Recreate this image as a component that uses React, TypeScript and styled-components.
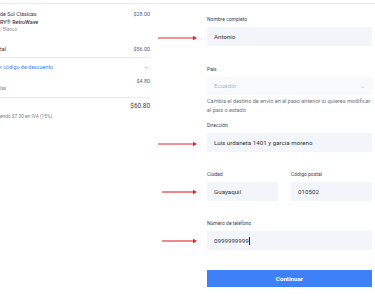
import React from "react";
import styled, { createGlobalStyle } from "styled-components";

const Global = createGlobalStyle`
  html, body { margin: 0; padding: 0; background: #ffffff; }
  body { font-family: Roboto, "Liberation Sans", Arial, sans-serif; }
  * { box-sizing: border-box; }
`;

const Page = styled.div`
  position: relative;
  width: 375px;
  height: 302px;
  overflow: hidden;
  padding-top: 3px;
`;

const Main = styled.div`
  display: grid;
  grid-template-columns: 150px 165px;
  column-gap: 57px;
  border-top: 1px solid #e8eaee;
  height: 299px;
`;

const Summary = styled.div`
  display: flex;
  flex-direction: column;
  padding-top: 6px;
  color: #333a44;
`;

const Row = styled.div<{ $mt?: number }>`
  display: flex;
  justify-content: space-between;
  align-items: flex-start;
  margin-top: ${(p) => p.$mt ?? 0}px;
`;

const Col = styled.div`
  display: flex;
  flex-direction: column;
`;

const Line = styled.div<{ $weight?: number; $color?: string; $size?: number }>`
  font-size: ${(p) => p.$size ?? 5.4}px;
  line-height: 8px;
  height: 8px;
  font-weight: ${(p) => p.$weight ?? 400};
  color: ${(p) => p.$color ?? "#333a44"};
  white-space: nowrap;
`;

const Price = styled.div<{ $size?: number; $weight?: number; $color?: string }>`
  font-size: ${(p) => p.$size ?? 5.4}px;
  line-height: 8px;
  font-weight: ${(p) => p.$weight ?? 400};
  color: ${(p) => p.$color ?? "#5a6170"};
  white-space: nowrap;
`;

const Divider = styled.div<{ $mt: number; $mb: number }>`
  height: 1px;
  background: #e9ebef;
  margin-top: ${(p) => p.$mt}px;
  margin-bottom: ${(p) => p.$mb}px;
`;

const Link = styled.div`
  font-size: 5.4px;
  line-height: 8px;
  color: #3b7ff0;
  white-space: nowrap;
`;

const Chevron = styled.svg`
  width: 5px;
  height: 5px;
  margin-top: 2px;
  margin-right: 1px;
`;

const TotalLine = styled.div`
  font-size: 6.4px;
  line-height: 9px;
  font-weight: 400;
  color: #3a404a;
`;

const Form = styled.div`
  display: flex;
  flex-direction: column;
  padding-top: 11px;
`;

const Field = styled.div<{ $mt?: number }>`
  display: flex;
  flex-direction: column;
  margin-top: ${(p) => p.$mt ?? 0}px;
`;

const Label = styled.div`
  font-size: 5px;
  line-height: 8px;
  height: 8px;
  margin-bottom: 4px;
  color: #3a4150;
  white-space: nowrap;
`;

const Input = styled.div<{ $h?: number }>`
  height: ${(p) => p.$h ?? 19}px;
  background: #f2f5f9;
  border-radius: 1px;
  display: flex;
  align-items: center;
  padding-left: 7px;
  font-size: 6.2px;
  color: #2f3540;
  white-space: nowrap;
`;

const Select = styled.div`
  height: 18px;
  background: #f8f9fb;
  display: flex;
  align-items: center;
  justify-content: space-between;
  padding: 0 6px 0 7px;
  font-size: 6.2px;
  color: #b3b8c0;
`;

const Helper = styled.div`
  margin-top: 2px;
  font-size: 5.55px;
  line-height: 9px;
  color: #6b7280;
`;

const Pair = styled.div`
  display: grid;
  grid-template-columns: 71px 81px;
  column-gap: 13px;
  margin-top: 18px;
`;

const Caret = styled.span`
  display: inline-block;
  width: 0;
  height: 8px;
  border-left: 0.8px solid #222;
  margin-left: 0.5px;
`;

const Button = styled.div`
  margin-top: 20px;
  height: 17px;
  background: #3d80f7;
  color: #ffffff;
  font-size: 6.2px;
  font-weight: 700;
  display: flex;
  align-items: center;
  justify-content: center;
`;

const Arrow = styled.svg<{ $x: number; $y: number }>`
  position: absolute;
  left: ${(p) => p.$x}px;
  top: ${(p) => p.$y}px;
  width: 42px;
  height: 8px;
  overflow: visible;
`;

function RedArrow({ x, y, len }: { x: number; y: number; len: number }) {
  return (
    <Arrow $x={x} $y={y - 4} viewBox="0 0 42 8">
      <line x1={0} y1={4} x2={len - 3} y2={4} stroke="#e3262b" strokeWidth={1.1} />
      <polygon points={`${len - 4},1.8 ${len},4 ${len - 4},6.2`} fill="#e3262b" />
    </Arrow>
  );
}

export default function App() {
  return (
    <>
      <Global />
      <Page>
        <Main>
          <Summary>
            <Row>
              <Col>
                <Line>de Sol Clásicas</Line>
                <Line $weight={500}>RY® RetroWave</Line>
                <Line $size={4.6} $color="#8a909a">/ Blanco</Line>
              </Col>
              <Price>$28.00</Price>
            </Row>
            <Row $mt={11}>
              <Line>tal</Line>
              <Price>$56.00</Price>
            </Row>
            <Divider $mt={4} $mb={5} />
            <Row>
              <Link>r código de descuento</Link>
              <Chevron viewBox="0 0 10 10">
                <path d="M2 3.5 L5 6.5 L8 3.5" fill="none" stroke="#8a909a" strokeWidth={1.3} />
              </Chevron>
            </Row>
            <Row $mt={6}>
              <Col>
                <Line> </Line>
                <Line $size={4.8} $color="#7a808a">las</Line>
              </Col>
              <Price>$4.80</Price>
            </Row>
            <Divider $mt={4} $mb={4} />
            <Row>
              <span />
              <TotalLine>$60.80</TotalLine>
            </Row>
            <Row $mt={2}>
              <Line $size={4.8} $color="#7a808a">endo $7.30 en IVA (15%)</Line>
            </Row>
          </Summary>

          <Form>
            <Field>
              <Label>Nombre completo</Label>
              <Input>Antonio</Input>
            </Field>
            <Field $mt={19}>
              <Label>País</Label>
              <Select>
                <span>Ecuador</span>
                <Chevron viewBox="0 0 10 10">
                  <path d="M2.5 3.5 L5 6 L7.5 3.5" fill="none" stroke="#b3b8c0" strokeWidth={1.1} />
                </Chevron>
              </Select>
              <Helper>
                Cambia el destino de envío en el paso anterior si quieres modificar el país o estado
              </Helper>
            </Field>
            <Field $mt={6}>
              <Label>Dirección</Label>
              <Input>Luis urdaneta 1401 y garcia moreno</Input>
            </Field>
            <Pair>
              <Field>
                <Label>Ciudad</Label>
                <Input>Guayaquil</Input>
              </Field>
              <Field>
                <Label>Código postal</Label>
                <Input>010502</Input>
              </Field>
            </Pair>
            <Field $mt={18}>
              <Label>Número de teléfono</Label>
              <Input>
                0999999999
                <Caret />
              </Input>
            </Field>
            <Button>Continuar</Button>
          </Form>
        </Main>
        <RedArrow x={158} y={38} len={39} />
        <RedArrow x={158} y={144} len={39} />
        <RedArrow x={162} y={192} len={35} />
        <RedArrow x={162} y={241} len={35} />
      </Page>
    </>
  );
}
